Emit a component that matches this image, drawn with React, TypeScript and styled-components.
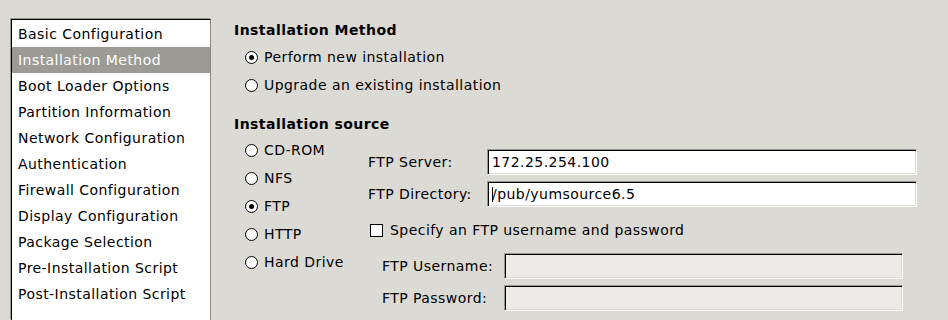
import React from "react";
import styled, { createGlobalStyle } from "styled-components";

const Global = createGlobalStyle`
  html, body {
    margin: 0;
    padding: 0;
    background: #dcdad5;
    overflow: hidden;
  }
  body {
    font-family: "DejaVu Sans", "Liberation Sans", sans-serif;
    font-size: 14px;
    letter-spacing: 0.45px;
    color: #000;
  }
`;

const Page = styled.div`
  display: flex;
  flex-direction: row;
  align-items: flex-start;
  width: 948px;
  height: 320px;
  padding: 19px 0 0 11px;
  box-sizing: border-box;
  overflow: hidden;
`;

const SideList = styled.ul`
  list-style: none;
  margin: 0;
  padding: 1px 0 0 0;
  width: 200px;
  height: 301px;
  box-sizing: border-box;
  background: #fff;
  border-top: 1px solid #000;
  border-left: 1px solid #000;
  border-right: 1px solid #8a8780;
  box-shadow: -1px -1px 0 #9a9893;
`;

const SideItem = styled.li<{ $active?: boolean }>`
  height: 26px;
  line-height: 26px;
  padding-left: 6px;
  white-space: nowrap;
  background: ${(p) => (p.$active ? "#9c9a94" : "transparent")};
  color: ${(p) => (p.$active ? "#fff" : "#000")};
`;

const Main = styled.div`
  display: flex;
  flex-direction: column;
  margin-left: 23px;
  padding-top: 1px;
`;

const Heading = styled.div`
  font-weight: bold;
  height: 20px;
  line-height: 20px;
`;

const RadioGroup = styled.div<{ $gapTop?: number }>`
  display: flex;
  flex-direction: column;
  padding-left: 11px;
  margin-top: ${(p) => p.$gapTop ?? 0}px;
`;

const OptionRow = styled.label`
  display: flex;
  align-items: center;
  height: 28px;
  gap: 6px;
  white-space: nowrap;
`;

const RadioDot = styled.span<{ $checked?: boolean }>`
  position: relative;
  width: 11px;
  height: 11px;
  border-radius: 50%;
  border: 1px solid #000;
  background: #fff;
  flex: none;
  &:after {
    content: "";
    display: ${(p) => (p.$checked ? "block" : "none")};
    position: absolute;
    left: 3px;
    top: 3px;
    width: 5px;
    height: 5px;
    border-radius: 50%;
    background: #000;
  }
`;

const Spacer = styled.div<{ $h: number }>`
  height: ${(p) => p.$h}px;
`;

const SourceRow = styled.div`
  display: flex;
  flex-direction: row;
  margin-top: 2px;
`;

const SourceRadios = styled(RadioGroup)`
  width: 123px;
`;

const FtpPanel = styled.div`
  display: flex;
  flex-direction: column;
  padding-top: 13px;
`;

const FieldGrid = styled.div<{ $label: number; $input: number; $indent?: number }>`
  display: grid;
  grid-template-columns: ${(p) => p.$label}px ${(p) => p.$input}px;
  grid-auto-rows: 26px;
  row-gap: 6px;
  align-items: center;
  margin-left: ${(p) => p.$indent ?? 0}px;
`;

const FieldLabel = styled.span`
  white-space: nowrap;
`;

const Entry = styled.div<{ $disabled?: boolean }>`
  height: 26px;
  box-sizing: border-box;
  border-top: 1px solid #9a9893;
  border-left: 1px solid #9a9893;
  border-right: 1px solid #fff;
  border-bottom: 1px solid #fff;
  box-shadow: inset 1px 1px 0 #000, inset -1px -1px 0 #dcdad5;
  background: ${(p) => (p.$disabled ? "#edebe7" : "#fff")};
  padding: 0 4px;
  line-height: 24px;
  white-space: nowrap;
  overflow: hidden;
`;

const Caret = styled.span`
  display: inline-block;
  width: 1px;
  height: 15px;
  background: #000;
  vertical-align: -3px;
  margin-right: -1px;
`;

const CheckRow = styled.label`
  display: flex;
  align-items: center;
  gap: 7px;
  height: 26px;
  margin: 10px 0 10px 2px;
  white-space: nowrap;
`;

const CheckBox = styled.span`
  width: 11px;
  height: 11px;
  border: 1px solid #000;
  background: #fff;
  flex: none;
`;

const menu = [
  "Basic Configuration",
  "Installation Method",
  "Boot Loader Options",
  "Partition Information",
  "Network Configuration",
  "Authentication",
  "Firewall Configuration",
  "Display Configuration",
  "Package Selection",
  "Pre-Installation Script",
  "Post-Installation Script",
];

const sources = ["CD-ROM", "NFS", "FTP", "HTTP", "Hard Drive"];

export default function App() {
  return (
    <>
      <Global />
      <Page>
        <SideList>
          {menu.map((m) => (
            <SideItem key={m} $active={m === "Installation Method"}>
              {m}
            </SideItem>
          ))}
        </SideList>
        <Main>
          <Heading>Installation Method</Heading>
          <RadioGroup $gapTop={3}>
            <OptionRow>
              <RadioDot $checked />
              Perform new installation
            </OptionRow>
            <OptionRow>
              <RadioDot />
              Upgrade an existing installation
            </OptionRow>
          </RadioGroup>
          <Spacer $h={15} />
          <Heading>Installation source</Heading>
          <SourceRow>
            <SourceRadios>
              {sources.map((s) => (
                <OptionRow key={s}>
                  <RadioDot $checked={s === "FTP"} />
                  {s}
                </OptionRow>
              ))}
            </SourceRadios>
            <FtpPanel>
              <FieldGrid $label={119} $input={430}>
                <FieldLabel>FTP Server:</FieldLabel>
                <Entry>172.25.254.100</Entry>
                <FieldLabel>FTP Directory:</FieldLabel>
                <Entry>
                  <Caret />/pub/yumsource6.5
                </Entry>
              </FieldGrid>
              <CheckRow>
                <CheckBox />
                Specify an FTP username and password
              </CheckRow>
              <FieldGrid $label={122} $input={399} $indent={14}>
                <FieldLabel>FTP Username:</FieldLabel>
                <Entry $disabled />
                <FieldLabel>FTP Password:</FieldLabel>
                <Entry $disabled />
              </FieldGrid>
            </FtpPanel>
          </SourceRow>
        </Main>
      </Page>
    </>
  );
}
